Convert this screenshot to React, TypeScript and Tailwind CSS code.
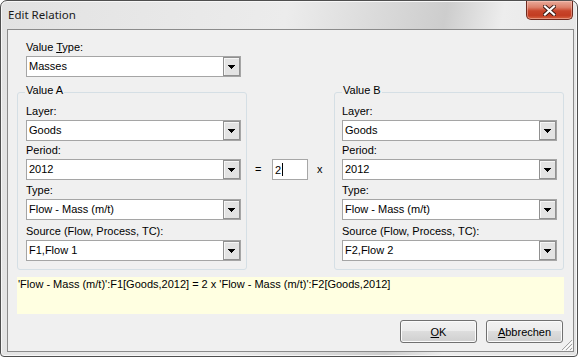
import React from 'react';
import clsx from 'clsx';

type ComboProps = { value: string; className?: string };

function Combo({ value, className }: ComboProps) {
  return (
    <div className={clsx('flex h-[21px] w-[215px] border border-[#a5a5a5] bg-white', className)}>
      <div className="flex-1 truncate pl-[2px] text-[11px] leading-[19px] text-black">{value}</div>
      <div className="flex h-full w-[17px] items-center justify-center border border-[#909090] bg-[#e3e3e3] shadow-[inset_1px_1px_0_#f6f6f6]">
        <svg width="7" height="4" viewBox="0 0 7 4" shapeRendering="crispEdges">
          <path d="M0 0h7v1H0zM1 1h5v1H1zM2 2h3v1H2zM3 3h1v1H3z" fill="#000" />
        </svg>
      </div>
    </div>
  );
}

type FieldProps = { label: React.ReactNode; value: string; className?: string };

function Field({ label, value, className }: FieldProps) {
  return (
    <div className={className}>
      <div className="h-[18px] pt-[2px] text-[11px] leading-[14px]">{label}</div>
      <Combo value={value} />
    </div>
  );
}

type GroupProps = { title: string; source: string; className?: string };

function Group({ title, source, className }: GroupProps) {
  return (
    <div className={clsx('relative h-[178px] w-[230px] rounded-[3px] border border-[#d5dfe5] pt-[9px]', className)}>
      <span className="absolute left-[7px] top-[-10px] bg-[#f0f0f0] px-px text-[11px] leading-[14px]">{title}</span>
      <Field label="Layer:" value="Goods" />
      <Field label="Period:" value="2012" />
      <Field label="Type:" value="Flow - Mass (m/t)" className="mt-px" />
      <Field label="Source (Flow, Process, TC):" value={source} className="mt-[2px]" />
    </div>
  );
}

function Button({ children }: { children: React.ReactNode }) {
  return (
    <button
      type="button"
      className="flex h-[23px] w-[77px] items-center justify-center rounded-[3px] border border-[#707070] bg-[linear-gradient(#f2f2f2_0%,#ebebeb_50%,#dddddd_50%,#cfcfcf_100%)] text-[11px] leading-[14px] text-black shadow-[inset_0_0_0_1px_#fbfbfb]"
    >
      {children}
    </button>
  );
}

function CloseButton() {
  return (
    <div className="mr-[4px] flex h-[19px] w-[47px] items-center justify-center rounded-b-[5px] border border-t-0 border-[#6e2a1f] bg-[linear-gradient(#e9ab9b_0%,#dc806a_35%,#c8452b_55%,#c33c22_80%,#d66443_100%)] shadow-[inset_0_0_0_1px_rgba(255,210,200,0.45)]">
      <svg width="13" height="11" viewBox="0 0 13 11">
        <path d="M2 1.5l9 8M11 1.5l-9 8" stroke="#3b1a14" strokeWidth="4" strokeLinecap="square" />
        <path d="M2 1.5l9 8M11 1.5l-9 8" stroke="#ffffff" strokeWidth="2.2" strokeLinecap="square" />
      </svg>
    </div>
  );
}

export default function App() {
  return (
    <div className="h-[358px] w-[580px] bg-white font-['Liberation_Sans',Arial,sans-serif] text-black">
      <div className="relative h-[357px] w-[578px] rounded-t-[7px] rounded-b-[4px] border border-[#4f4f4f] bg-[linear-gradient(100deg,#e2e2e2_0%,#ececec_45%,#cdcdcd_70%,#ededed_79%,#e3e3e3_100%)] shadow-[inset_0_0_0_1px_#f7f7f7]">
        <div className="flex h-[28px] items-start justify-between">
          <div className="pl-[7px] pt-[6px] font-['Noto_Sans',sans-serif] text-[11.5px] leading-[16px] text-[#1a1a1a]">
            Edit Relation
          </div>
          <CloseButton />
        </div>

        <div className="relative ml-[6px] h-[323px] w-[567px] border border-[#8b8b8b] bg-[#f0f0f0] pl-[9px] pt-[8px]">
          <Field
            className="ml-[9px]"
            label={
              <>
                Value <span className="underline">T</span>ype:
              </>
            }
            value="Masses"
          />

          <div className="mt-[15px] flex items-start">
            <Group title="Value A" source="F1,Flow 1" className="pl-[8px]" />
            <div className="flex w-[87px] items-center pl-[8px] pt-[67px] text-[11px]">
              <div className="flex h-[21px] w-[17px] items-center">=</div>
              <div className="flex h-[21px] w-[36px] items-center border border-[#a7a7a7] bg-white pl-[2px]">
                <span className="leading-[14px]">2</span>
                <span className="ml-px h-[13px] w-px bg-black" />
              </div>
              <div className="ml-[9px] flex h-[21px] items-center">x</div>
            </div>
            <Group title="Value B" source="F2,Flow 2" className="pl-[7px]" />
          </div>

          <div className="mt-[7px] h-[37px] w-[547px] bg-[#ffffe1] pl-px text-[11px] leading-[14px]">
            'Flow - Mass (m/t)':F1[Goods,2012] = 2 x 'Flow - Mass (m/t)':F2[Goods,2012]
          </div>

          <div className="mt-[6px] flex justify-end gap-[9px] pr-[10px]">
            <Button>
              <span className="underline">O</span>K
            </Button>
            <Button>
              <span className="underline">A</span>bbrechen
            </Button>
          </div>

          <svg className="absolute bottom-0 right-0" width="12" height="12" viewBox="0 0 12 12">
            <path d="M11 1L1 11M11 5L5 11M11 9L9 11" stroke="#a2a2a2" strokeWidth="1" />
            <path d="M12 2L2 12M12 6L6 12M12 10L10 12" stroke="#ffffff" strokeWidth="1" />
          </svg>
        </div>
      </div>
    </div>
  );
}
